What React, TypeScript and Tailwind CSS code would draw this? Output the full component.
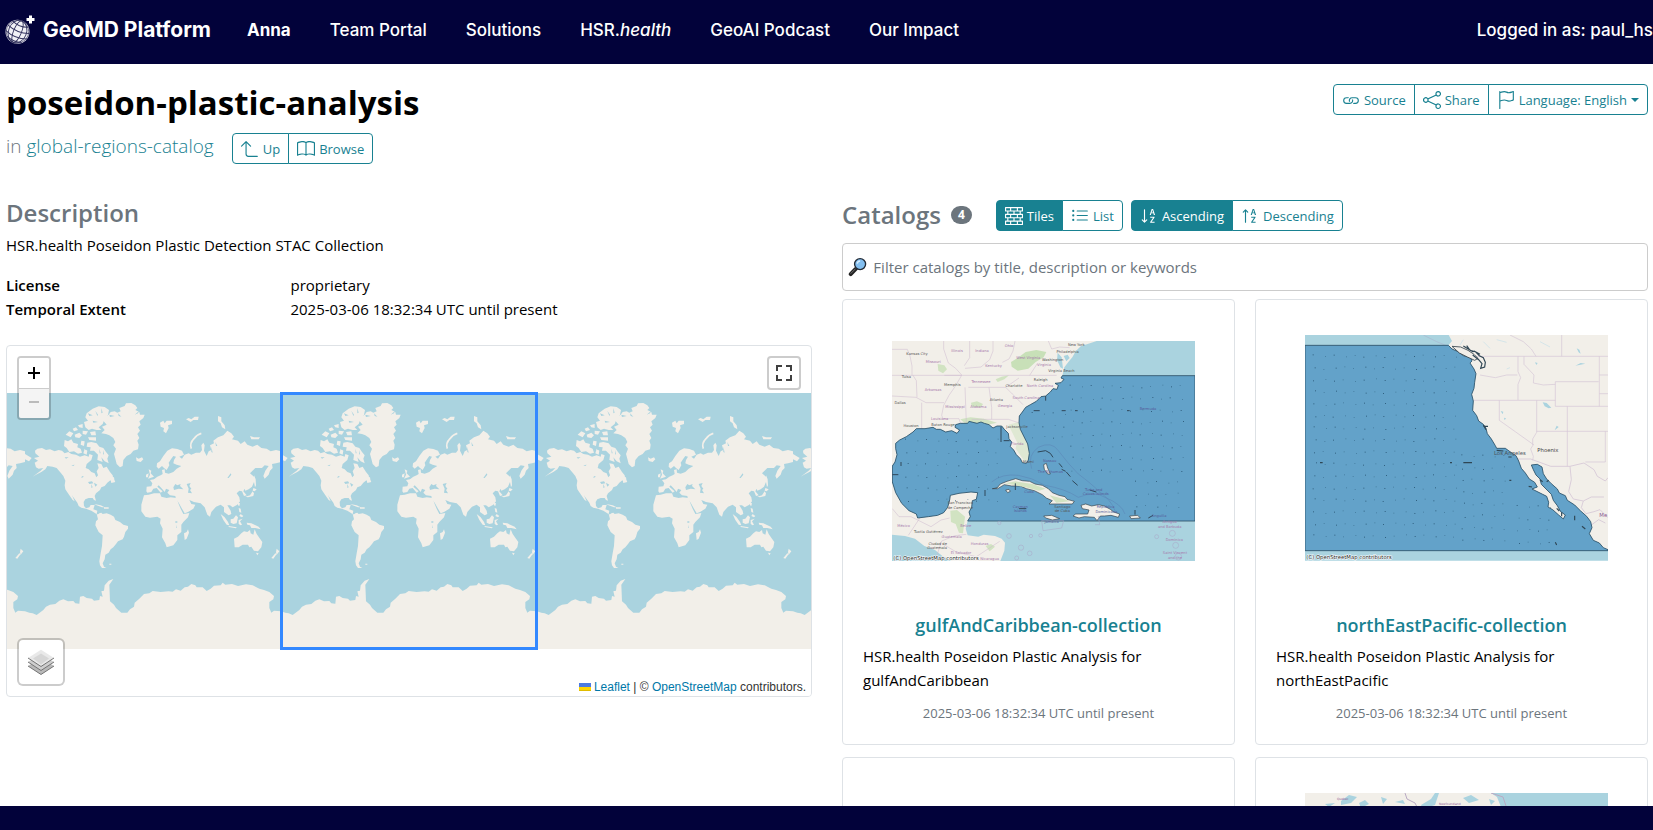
import type { ReactNode } from "react";
import {
  BsArrow90DegUp,
  BsBook,
  BsBricks,
  BsFlag,
  BsLink,
  BsListUl,
  BsShare,
  BsSortAlphaDown,
  BsSortAlphaUp,
} from "react-icons/bs";
import clsx from "clsx";

const NAV_LINKS = ["Team Portal", "Solutions", "HSR.health", "GeoAI Podcast", "Our Impact"];

/* ================= BUTTONS ================= */
type GroupButtonProps = {
  icon: ReactNode;
  children: ReactNode;
  active?: boolean;
};

function GroupButton({ icon, children, active }: GroupButtonProps) {
  return (
    <button
      type="button"
      className={clsx(
        "-ml-px flex h-[31px] items-center gap-1 border border-[#188191] px-2 text-[13px] first:ml-0 first:rounded-l last:rounded-r",
        active ? "bg-[#188191] text-white" : "bg-white text-[#188191]"
      )}
    >
      {icon}
      {children}
    </button>
  );
}

/* ================= LOGO ================= */
function GlobeLogo() {
  return (
    <svg viewBox="0 0 30 32" className="h-8 w-[30px]" aria-hidden="true">
      <circle cx="12.500" cy="17.700" r="12" fill="#f1f1f6" />
      <g fill="none" stroke="#34345f" strokeWidth="0.900" transform="rotate(22 12.500 17.700)">
        <circle cx="12.500" cy="17.700" r="11.300" strokeWidth="0.600" />
        <ellipse cx="12.500" cy="17.700" rx="4" ry="11.600" />
        <ellipse cx="12.500" cy="17.700" rx="9" ry="11.600" />
        <path d="M4 9.500q8.500 4 17 0M1 15q11.500 4.500 23 0M1 21q11.500 4.500 23 0M4.500 26q8 3 16 0" />
      </g>
      <path d="M24 1.500h3V4h2.500v3H27v2.500h-3V7h-2.500V4H24z" fill="#fff" />
    </svg>
  );
}

function SearchGlyph() {
  return (
    <svg viewBox="0 0 20 20" className="size-5" aria-hidden="true">
      <path d="M2.800 17.400 8 12" stroke="#222" strokeWidth="4" strokeLinecap="round" />
      <path d="M3 16.600 7.600 12" stroke="#777" strokeWidth="1" strokeLinecap="round" />
      <circle cx="12.500" cy="7" r="5.700" fill="#83bff0" stroke="#222b36" strokeWidth="1.400" />
      <path d="M9.500 6.500a3.400 3.400 0 0 1 3-2.800" stroke="#d8efff" strokeWidth="1.600" fill="none" />
    </svg>
  );
}

/* ================= WORLD MAP ================= */
function WorldSymbol() {
  return (
    <symbol id="world" viewBox="33 39 768 768">
      <rect x="33" y="39" width="768" height="768" fill="#aad3df" />
      <g fill="#f2efe9">
        {/* North America */}
        <path d="M63 212 70 206 84 204 96 210 108 208 122 214 134 210 144 212 152 220 163 216 172 222 186 224 198 230 212 226 224 230 226 222 236 226 232 240 218 252 215 264 224 268 232 276 242 280 247 292 252 286 248 274 254 264 250 250 262 252 268 264 278 260 288 276 296 286 298 296 304 306 292 309 290 300 280 308 272 318 262 322 258 330 246 340 242 348 246 362 240 360 236 354 224 354 214 358 209 366 210 378 216 385 226 382 230 375 242 375 238 388 250 392 248 402 262 404 256 409 244 400 232 392 216 386 202 383 194 378 190 368 178 352 174 346 182 364 176 360 162 340 154 328 152 316 154 302 148 288 140 278 128 264 116 260 100 258 94 268 82 276 66 284 56 290 80 272 88 264 74 266 66 262 62 248 72 242 60 234 76 230 64 220Z" />
        <path d="M218 100 236 86 254 79 272 81 285 90 282 104 272 116 266 132 254 142 262 150 248 150 234 146 224 150 214 142 210 126 222 122 214 112Z" />
        <path d="M152 180 162 184 172 178 178 188 192 192 190 202 200 206 204 218 192 221 180 214 166 216 158 204 150 198Z" />
        <path d="M220 188 232 186 248 190 256 200 268 204 276 216 284 226 280 236 284 250 272 244 262 232 266 246 250 240 252 224 240 212 228 212 230 202 218 200Z" />
        <path d="M155 164 166 154 178 160 170 172ZM176 146 186 142 192 150 180 154ZM182 164 196 158 204 166 196 174 184 172ZM206 152 222 154 216 164 206 162ZM222 172 246 172 246 182 226 180ZM202 182 212 184 210 198 200 194ZM192 136 206 132 206 144 196 142ZM228 156 244 154 246 166 232 166ZM212 206 220 212 218 224 208 220Z" />
        <path d="M288 290 300 292 302 306 290 302Z" />
        {/* Greenland and Iceland */}
        <path d="M266 120 272 110 284 104 290 96 302 94 310 98 320 94 316 84 332 78 336 70 352 69 364 76 370 84 364 90 376 96 378 104 392 104 388 114 376 124 380 134 372 142 378 152 370 162 376 174 370 182 374 194 372 208 358 212 350 222 338 228 328 240 326 258 318 262 308 252 304 236 300 222 306 206 298 196 304 186 298 174 286 166 276 162 262 160 272 150 264 140 278 134Z" />
        <path d="M366 232 374 236 384 232 388 238 380 246 368 243Z" />
        {/* South America */}
        <path d="M249 406 256 400 262 398 266 402 278 400 290 404 300 410 304 420 318 426 328 434 342 438 342 446 334 456 330 470 326 478 312 484 306 492 298 502 290 508 284 518 274 524 272 538 266 550 270 560 277 564 264 564 258 556 256 544 260 520 264 498 266 466 254 456 244 436 246 424 252 418Z" />
        {/* Europe and Asia */}
        <path d="M400 338 397 334 398 320 412 319 415 310 408 300 420 298 430 290 440 286 446 282 444 270 452 268 453 278 464 281 478 276 488 266 502 258 488 254 478 250 480 240 486 230 478 228 472 236 464 248 466 256 458 270 450 264 444 258 434 266 428 260 429 250 438 244 448 228 460 212 474 205 490 207 504 212 510 224 496 230 504 236 512 224 524 220 532 224 546 218 558 218 564 210 562 196 568 188 572 196 570 212 578 228 584 214 592 210 588 196 600 190 598 182 612 172 628 166 640 152 652 160 660 170 654 178 672 182 680 192 692 184 700 194 716 200 730 194 742 204 758 206 770 214 786 210 801 214 801 246 786 250 774 252 776 264 768 272 764 284 752 296 748 288 754 272 764 258 752 256 744 264 724 264 708 280 720 290 720 306 714 320 704 328 694 332 692 326 688 334 698 346 690 348 684 334 676 332 668 340 676 352 678 364 670 374 656 382 648 376 640 376 650 392 652 402 644 406 630 396 630 382 620 374 606 380 592 396 588 410 580 404 572 382 560 370 540 366 526 360 532 372 544 374 538 386 522 396 512 400 504 386 494 368 486 358 484 348 468 346 460 338 466 330 456 326 452 336 444 326 434 316 430 320 446 334 440 338 428 324 418 326 412 336Z" />
        <path d="M390 346 404 344 420 340 438 340 442 350 458 354 470 352 488 354 494 372 500 386 508 402 526 399 522 412 508 426 502 434 502 456 490 466 490 480 478 496 458 502 454 490 444 472 446 446 438 430 440 416 430 410 408 413 394 410 382 394 382 374Z" />
        <path d="M510 460 518 456 522 448 525 458 518 476 512 480Z" />
        {/* Islands around Europe and the Arctic */}
        <path d="M404 268 412 272 410 280 420 290 402 296 408 284ZM396 284 404 280 402 292 396 292ZM438 128 448 122 452 130 458 122 474 122 474 132 462 136 464 144 456 160 448 154 450 144 440 140Z" />
        <path d="M516 118l8-4 8 4 10-8 12 0-2 10-14 0-8 6ZM612 108l10 4 0 12 10 12 2 12-10-6-4-12-8-6ZM708 168l12 4 18 0-4 6-22 0Z" />
        {/* East Asia and Oceania */}
        <path d="M720 286l5 12 1 18-3 6-3-16ZM718 324l10 4-6 6-6-2ZM716 334l4 6-2 8-16 4-8-2 14-4ZM672 368l6 2-2 8-4-2Z" />
        <path d="M620 402l12 10 10 14 4 10-8-2-10-14ZM650 418l8-2 8-10 6 6-4 18-10 2-8-4ZM644 438l24 4-2 3-22-4ZM674 420l12-4-8 8 6 10-4 2-6-4ZM674 384l6 2 2 12-6-2ZM680 402l8 6-4 4-8-4ZM698 428l14 2 22 10 6 8-16-4-12 0-4-8-8-2Z" />
        <path d="M660 476 672 470 682 460 690 454 700 456 708 450 710 460 718 464 722 448 728 462 738 476 745 486 742 502 732 514 720 512 712 500 706 502 702 494 686 494 674 502 662 502ZM726 518l8 2-4 6ZM788 506l8 8-8 10-2-8ZM784 520l4 2-10 14-6-2Z" />
        <path d="M33 222l20 12-8 10-12-6ZM286 551h6v3h-6ZM240 372l20 4 12 6-8 0-16-6ZM270 382h14v4h-14Z" />
        {/* Antarctica */}
        <path d="M33 694 46 698 56 700 68 705 80 696 88 690 96 680 108 674 124 672 136 662 148 658 162 664 178 663 184 670 196 671 198 650 208 648 218 654 234 656 240 662 256 660 258 648 266 650 262 634 270 632 272 616 284 602 298 597 286 614 288 664 300 674 306 684 322 698 340 698 348 688 360 680 362 668 376 656 390 642 406 640 416 633 440 636 464 634 476 635 486 628 500 632 512 622 522 620 532 612 544 616 548 622 566 622 578 633 590 626 600 617 620 616 626 608 634 614 654 612 672 618 696 613 716 616 736 626 750 630 766 636 780 648 778 658 766 666 766 684 772 698 780 692 801 694V807H33Z" />
      </g>
      <path d="M532 206q-6-16 8-30 8-12 22-16" fill="none" stroke="#f2efe9" strokeWidth="5" />
      <g fill="#aad3df">
        <path d="M478 322 484 312 490 316 500 312 498 318 508 328 494 326 480 330ZM518 312 530 309 526 318 532 326 528 330 534 340 522 338 524 326Z" />
        <path d="M222 306l12-2 4 6-12 2ZM232 312l4 10-4 2ZM240 308l10 6-6 6ZM204 288l6 2-8 4ZM152 232l12 0-8 4ZM172 256l10-2-4 4ZM640 294l10-14 2 4-8 10ZM484 424h6v4h-6ZM486 434l2 10h-2Z" />
        <path d="M222 100l14 6-10 2ZM244 92l8 12-2 4ZM262 84l4 14-4 2ZM236 122l16 4-14 2ZM286 104l16 4-14 3ZM312 100l10 10-8-2ZM376 92l-14 12 10-4ZM198 192l4 12-2 2ZM214 190l3 20-3 0ZM256 206l4 14-3 0ZM268 210l2 14-3-2ZM604 186l6 12-4 0ZM592 200l4 18-4-2Z" />
      </g>
    </symbol>
  );
}

function ExtentMap() {
  return (
    <div className="relative h-[352px] overflow-hidden rounded border border-[#dee2e6] bg-white">
      <svg width="0" height="0" className="absolute" aria-hidden="true">
        <WorldSymbol />
      </svg>
      <div className="flex h-full items-center justify-center">
        {[0, 1, 2, 3, 4].map((i) => (
          <svg key={i} className="size-64 shrink-0" role="img" aria-label="World map">
            <use href="#world" width="256" height="256" />
          </svg>
        ))}
      </div>
      <div className="absolute inset-0 flex items-center justify-center">
        <div className="size-[258px] border-[3px] border-[#3388ff]" />
      </div>

      <div className="absolute top-2.5 left-2.5 rounded border-2 border-black/20 bg-clip-padding">
        <button
          type="button"
          aria-label="Zoom in"
          className="flex size-[30px] items-center justify-center rounded-t-xs bg-white"
        >
          <svg viewBox="0 0 12 12" className="size-3">
            <path d="M0 6h12M6 0v12" stroke="#000" strokeWidth="2" />
          </svg>
        </button>
        <button
          type="button"
          aria-label="Zoom out"
          disabled
          className="flex h-[30px] w-[30px] items-center justify-center rounded-b-xs border-t border-[#ccc] bg-[#f4f4f4] pb-1"
        >
          <svg viewBox="0 0 10 2" className="h-0.5 w-2.5">
            <path d="M0 1h10" stroke="#bbb" strokeWidth="2" />
          </svg>
        </button>
      </div>

      <button
        type="button"
        aria-label="Full screen"
        className="absolute top-2.5 right-2.5 flex size-[34px] items-center justify-center rounded border-2 border-black/20 bg-white bg-clip-padding"
      >
        <svg viewBox="0 0 16 16" className="size-4">
          <path d="M1 6V1h5M10 1h5v5M15 10v5h-5M6 15H1v-5" fill="none" stroke="#404040" strokeWidth="2" />
        </svg>
      </button>

      <button
        type="button"
        aria-label="Layers"
        className="absolute bottom-2.5 left-2.5 flex size-12 items-center justify-center rounded-md border-2 border-black/20 bg-white bg-clip-padding"
      >
        <svg viewBox="0 0 26 26" className="size-[26px]">
          <path d="M0 17 13 9l13 8-13 8.500z" fill="#b9b9b9" />
          <path d="M0 17l13 8.500L26 17" fill="none" stroke="#747474" />
          <path d="M0 13 13 5l13 8-13 8.500z" fill="#cecece" />
          <path d="M0 13l13 8.500L26 13" fill="none" stroke="#747474" />
          <path d="M0 9 13 .800 26 9l-13 8.500z" fill="#e9e9e9" />
          <path d="M5 9.500 13 4.500l8 5-8 6z" fill="#d6d6d6" />
          <path d="M0 9l13 8.500L26 9" fill="none" stroke="#747474" />
        </svg>
      </button>

      <div className="absolute right-0 bottom-0 flex items-center gap-[3px] bg-white/80 px-[5px] font-['Liberation_Sans',sans-serif] text-xs leading-[18px] text-[#333]">
        <svg viewBox="0 0 12 8" className="h-2 w-3" aria-hidden="true">
          <path d="M0 0h12v4H0z" fill="#4c7be1" />
          <path d="M0 4h12v3H0z" fill="#ffd500" />
          <path d="M0 7h12v1H0z" fill="#e0bc00" />
        </svg>
        <p>
          <a href="#leaflet" className="text-[#0078a8]">Leaflet</a> | ©{" "}
          <a href="#osm" className="text-[#0078a8]">OpenStreetMap</a> contributors.
        </p>
      </div>
    </div>
  );
}

/* ================= THUMBNAILS ================= */
type Label = [x: number, y: number, text: string];

function MapLabels({ labels, fill }: { labels: Label[]; fill: string }) {
  return (
    <g fill={fill} fontSize="11" textAnchor="middle" fontFamily="'DejaVu Sans', sans-serif">
      {labels.map(([x, y, text]) => (
        <text key={`${text}-${y}`} x={x} y={y}>
          {text}
        </text>
      ))}
    </g>
  );
}

type SoundingsProps = { x: number; y: number; cols: number; rows: number };

function Soundings({ x, y, cols, rows }: SoundingsProps) {
  const dots = Array.from({ length: cols * rows }, (_, i) => ({
    cx: x + (i % cols) * 30 + ((i * 7) % 11),
    cy: y + Math.floor(i / cols) * 36 + ((i * 5) % 9),
    strong: (i * 13) % 5 < 2,
  }));
  return (
    <g fill="#24506e">
      {dots.map((d, i) => (
        <rect key={i} x={d.cx} y={d.cy} width="3" height="3" opacity={d.strong ? 0.8 : 0.4} />
      ))}
    </g>
  );
}

const GULF_COAST =
  "682 241 678 248 687 252 678 262 660 264 670 270 666 282 654 280 646 290 632 302 618 304 604 318 586 328 572 336 562 350 553 362 552 382 556 402 566 422 578 446 583 474 580 494 574 504 562 502 556 490 544 478 536 464 526 454 530 440 522 430 520 414 508 402 500 392 486 392 474 398 462 388 448 384 438 380 426 384 402 378 398 384 376 384 362 388 360 396 374 404 366 414 350 406 332 410 316 402 304 402 294 396 270 400 244 400 234 410 214 424 194 434 182 444 182 460 186 478 180 500 172 512 172 560 182 592 200 624 222 646 244 656 248 668 280 664 308 660 326 652 338 636 344 614 346 600 372 594 408 590 428 592 424 612 412 616 410 636 402 650 406 664 398 677";

function GulfMap() {
  return (
    <svg viewBox="171 137 909 660" className="w-full" role="img" aria-label="Gulf and Caribbean">
      <path d="M171 137H1080V797H171Z" fill="#aad3df" />
      <path
        d={`M171 137H785L758 146 738 152 722 168 712 186 700 200 688 216 ${GULF_COAST} 392 700 398 720 430 724 446 718 480 722 500 730 510 742 508 766 496 797H350L322 782 300 764 268 752 240 730 210 722 171 718Z`}
        fill="#f2efe9"
      />
      <g fill="#c8e0b8">
        <path d="M528 200 548 188 572 170 604 164 634 170 626 186 602 200 580 220 548 226 530 214Z" />
        <path d="M308 206l20 4 8 12-12 12-14-8ZM482 252l18-8 22-4-14 12-20 8ZM346 646l20-2 24 20-6 50-12-2-10-26-14-6ZM452 752l16-6 12 8-16 14ZM408 322l18-4 18 8-6 10-28-2ZM376 372l30-6 40 4 40 12-28 6-70-6Z" opacity=".8" />
        <path d="M520 388l32-8 8 30 22 48 0 34-12 8-14-20-14-20 4-20Z" opacity=".45" />
      </g>
      <g fill="none" stroke="#cdb9cf" strokeWidth="1.500">
        <path d="M171 162h46l8 20 6 30v28M171 240h494M234 240l10 16 2 50M171 302l72 4 30 16h54M328 240l52 0-20 34-18 26-16 30-6 30 4 10h48l6 20M260 322v78M390 276l4 106M462 276l8 60v36h-60M400 276h112l20 20 32 32M512 276l40-28M326 137v24l14 42 22 16 18 20M404 137v50l-16 24M474 137v30l-10 26-26 22-48 4M540 137l-6 30-12 24-20 10M640 137l10 24 24-6 30 2M606 206l-22 34M470 372h50l30 10" />
        <path d="M172 640l20 24 36 0 60 30 30-20 26-6M300 797l20-60 40-16 34-4M320 744l44 26 60 14 70-46M260 660l-40 60" />
      </g>
      <path
        d="M668 172l12 14 4 34-8-4-10-22ZM686 182l12-4 6 10-10 10Z"
        fill="#aad3df"
      />
      <path d={`M${GULF_COAST}H1080V241Z`} fill="#63a2c9" stroke="#2b4f66" strokeWidth="2.500" />
      <Soundings x={704} y={268} cols={12} rows={8} />
      <Soundings x={210} y={430} cols={10} rows={6} />
      <Soundings x={590} y={350} cols={4} rows={3} />
      <Soundings x={900} y={556} cols={5} rows={3} />
      <path
        d="M470 560q30-26 80-20 40 6 80 30 60 10 100 36 50-20 80 0 50 20 60 50M590 520q-14-40 20-64 40-20 60 10 30 40 60 70 40 30 60 50 40 30 50 60"
        fill="none"
        stroke="#5b82b4"
        strokeWidth="1.500"
      />
      <g fill="#f2efe9" stroke="#33414a" strokeWidth="2">
        <path d="M472 580 486 578 496 566 516 558 542 550 562 556 584 558 600 566 622 570 640 580 652 592 672 600 690 604 696 612 718 618 712 626 684 626 642 626 652 616 634 608 622 598 598 586 574 580 556 572 530 572 508 568 488 580Z" />
        <path d="M738 630 752 626 770 632 790 628 808 632 826 642 836 650 854 656 850 666 828 660 808 662 796 662 786 676 778 666 748 664 732 668 714 662 722 656 758 656 762 644 742 640Z" />
        <path d="M626 662 650 660 674 670 652 674 632 668ZM884 662 908 660 916 668 888 670ZM512 584l10-2 4 6-8 4ZM626 508l8-4 4 14 8 18-8 0-10-14Z" />
      </g>
      <path d="M510 564l32-6 50 8 40 14-20 6-40-10ZM644 600l40 10 20 8-40 4Z" fill="#d3e3c2" />
      <path
        d="M608 470l24-4 14 8 8 12M672 504l10 12M680 522l12 6M694 530l12 14M712 556l16 14M764 584l20 6M940 668l14-8M596 346h18M680 346h12M720 346h8M876 346h8M498 394v46M506 436h18M632 302v14M450 584v18M541 564v20M552 640h22M172 538h18M198 500v12M900 644v14"
        fill="none"
        stroke="#30485a"
        strokeWidth="3"
      />
      <g fill="none" stroke="#a9a4c6" strokeWidth="1.500">
        <path d="M620 676l66 0-6 22-56 8ZM790 662l4 26-14 0" />
        <circle cx="493" cy="683" r="5" />
        <circle cx="588" cy="722" r="5" />
        <circle cx="616" cy="720" r="5" />
        <circle cx="522" cy="722" r="7" />
        <circle cx="558" cy="757" r="8" />
        <circle cx="584" cy="774" r="7" />
        <circle cx="965" cy="724" r="6" />
        <circle cx="1012" cy="714" r="9" />
        <circle cx="1022" cy="750" r="9" />
        <circle cx="1030" cy="784" r="10" />
        <circle cx="545" cy="788" r="6" />
      </g>
      <MapLabels
        fill="#555"
        labels={[
          [246, 180, "Kansas City"],
          [214, 248, "Tulsa"],
          [352, 271, "Memphis"],
          [537, 276, "Charlotte"],
          [484, 316, "Atlanta"],
          [195, 326, "Dallas"],
          [228, 396, "Houston"],
          [324, 393, "Baton Rouge"],
          [546, 399, "Jacksonville"],
          [617, 256, "Raleigh"],
          [679, 231, "Virginia Beach"],
          [653, 198, "Washington"],
          [698, 172, "Philadelphia"],
          [724, 153, "New York"],
          [580, 502, "Miami"],
          [376, 627, "San Francisco"],
          [376, 640, "de Campeche"],
          [280, 713, "Tuxtla Gutiérrez"],
          [308, 748, "Ciudad de"],
          [306, 760, "Guatemala"],
          [682, 637, "Santiago"],
          [682, 650, "de Cuba"],
        ]}
      />
      <MapLabels
        fill="#a77aac"
        labels={[
          [295, 203, "Missouri"],
          [366, 169, "Illinois"],
          [441, 169, "Indiana"],
          [522, 156, "Ohio"],
          [476, 216, "Kentucky"],
          [580, 190, "West Virginia"],
          [627, 211, "Virginia"],
          [438, 262, "Tennessee"],
          [294, 287, "Arkansas"],
          [615, 276, "North Carolina"],
          [573, 312, "South Carolina"],
          [360, 337, "Mississippi"],
          [430, 337, "Alabama"],
          [510, 334, "Georgia"],
          [314, 375, "Louisiana"],
          [547, 449, "Florida"],
          [206, 695, "México"],
          [392, 694, "Belize"],
          [350, 729, "Guatemala"],
          [434, 749, "Honduras"],
          [378, 775, "El Salvador"],
          [464, 795, "Nicaragua"],
          [1004, 684, "Antigua"],
          [1004, 697, "and Barbuda"],
          [1018, 736, "Dominica"],
          [1020, 777, "Saint Vincent"],
          [1020, 791, "and the"],
        ]}
      />
      <MapLabels
        fill="#575e9c"
        labels={[
          [939, 343, "Bermuda"],
          [644, 500, "Nassau"],
          [646, 534, "The Bahamas"],
          [582, 594, "Cuba"],
          [556, 637, "Cayman"],
          [556, 650, "Islands"],
          [650, 682, "Jamaica"],
          [776, 586, "Turks and"],
          [782, 599, "Caicos Islands"],
          [812, 639, "República"],
          [814, 652, "Dominicana"],
          [972, 664, "Anguilla"],
        ]}
      />
      <text x="175" y="793" fontSize="16" fill="#222" stroke="#fff" strokeWidth="3" paintOrder="stroke" fontFamily="'DejaVu Sans', sans-serif">
        (C) OpenStreetMap contributors
      </text>
    </svg>
  );
}

const PACIFIC_COAST =
  "595 151 606 162 624 170 640 182 662 188 666 198 660 204 672 222 678 236 674 262 672 280 665 298 670 318 668 346 680 362 686 378 700 388 708 400 712 416 724 432 736 452 740 460 766 460 780 470 798 482 806 498 814 520 826 534 838 552 854 562 862 576 846 582 858 588 878 598 890 604 896 622 894 636 908 644 926 660 940 672 946 660 932 650 922 632 910 616 904 598 888 582 874 568 870 552 858 540 850 524 844 510 862 508 876 516 880 536 890 552 904 566 922 582 928 594 946 602 952 616 974 630 992 648 1010 664 1022 680 1026 698 1018 716 1030 736 1048 744 1060 758 1074 764";

function PacificMap() {
  return (
    <svg viewBox="165 120 909 677" className="w-full" role="img" aria-label="North east Pacific">
      <path d="M165 120H1074V797H165Z" fill="#aad3df" />
      <path d={`M${PACIFIC_COAST}V120H596L606 138Z`} fill="#f2efe9" />
      <path d="M520 120l40 20 30 12" fill="none" stroke="#a9b7d0" strokeWidth="2" />
      <g fill="none" stroke="#d5c6d6" strokeWidth="2">
        <path d="M660 184h414M780 120l40 20 24 22 14 22M935 120v64M690 240l46 8 34-8h32M804 184v46l8 18-8 20 0 47M822 184v24l30 32-2 24 30 6 36-2M916 260h130M916 260v74h158M672 316h244M748 316v60l104 74M860 316v96l-12 20 0 20-6 10 8 22-2 12M860 409h214M952 334v180M1048 184v150M1048 240h26M1048 296h26M1066 409v92h-60" />
        <path d="M802 492h40l60 22h58l42-10 30 20 10 20 24 14 8-10M960 514l4 40-8 36 14 22M970 612l30 6 24-12 38 0M1000 618l-6 20 14 18 24-6 18-6 24 24M1024 690l22-16 20 10" strokeWidth="2.500" />
      </g>
      <g fill="#aad3df">
        <path d="M878 322l12 2 14 14-8 2-12-6ZM855 202l8 2-4 6ZM980 160l8 4 4 12-6-4ZM1006 206l-30 6 16-8ZM926 396l-12 10 6-14ZM752 348l8 2-2 8ZM762 368l6 2-4 6Z" />
        <path d="M700 140l20 20M740 134l30 8M870 140l30 16M640 134l-10 16M770 222l10-4" stroke="#c5e0e8" strokeWidth="2" />
      </g>
      <path d={`M165 151L${PACIFIC_COAST}V767H165Z`} fill="#63a2c9" stroke="#2b4f66" strokeWidth="2.500" />
      <Soundings x={188} y={178} cols={15} rows={16} />
      <Soundings x={634} y={478} cols={5} rows={8} />
      <Soundings x={800} y={630} cols={4} rows={4} />
      <path d="M606 154 632 156 654 166 672 178 684 190 674 196 652 186 628 174Z" fill="#f2efe9" stroke="#33414a" strokeWidth="2.500" />
      <path d="M650 152l10 14 16 4 12 12 12 6 6 14-2 14-12 4 4-14-10-12-18-14M672 168l18 10M640 153l30 18M700 394h14M700 390l8 14M740 466l20 2M775 486h10M836 574l10 2M870 554l8 6M890 560l6-4M920 640l8 8M935 652v12M996 694l10 8M916 742l4 8M778 556h6M640 503h26M600 503h6M210 503h8M974 662v14" fill="none" stroke="#2f4654" strokeWidth="3.500" />
      <g fontSize="16" fontFamily="'DejaVu Sans', sans-serif">
        <text x="732" y="481" fill="#4c5560">Los Angeles</text>
        <text x="862" y="470" fill="#444">Phoenix</text>
        <text x="1048" y="667" fill="#8d5d92">Me</text>
        <text x="169" y="793" fill="#222" stroke="#fff" strokeWidth="3" paintOrder="stroke">
          (C) OpenStreetMap contributors
        </text>
      </g>
    </svg>
  );
}

function NorthMap() {
  return (
    <svg viewBox="0 0 303 226" className="w-full" role="img" aria-label="Collection preview">
      <path d="M0 0h303v226H0z" fill="#aad3df" />
      <path d="M0 0h186l6 4 4 10-8 4 6 8-10 200H0z" fill="#f2efe9" />
      <g fill="#aad3df">
        <path d="M36 8l8-6 8 2-6 6-10 2ZM20 11l10-1-6 4ZM54 10l6-3 4 4-8 4ZM116 12l10-6 4-6 4 0-4 12-12 4ZM76 4l6 2-4 5ZM90 9l8-2 2 4ZM158 5l8-3 8 5-10 3ZM140 13h20v2h-20ZM184 6l6 2-4 4Z" />
      </g>
      <path d="M100 0l2 6 8 4 4 8M186 0l12 4 4 12" fill="none" stroke="#b9aac4" />
      <g fill="#8f6096" fontSize="3" fontFamily="'DejaVu Sans', sans-serif">
        <text x="32" y="7">Quebec</text>
        <text x="134" y="12">Newfoundland</text>
      </g>
    </svg>
  );
}

/* ================= CARDS ================= */
type Catalog = {
  title: string;
  description: string;
  preview: ReactNode;
};

const CATALOGS: Catalog[] = [
  {
    title: "gulfAndCaribbean-collection",
    description: "HSR.health Poseidon Plastic Analysis for gulfAndCaribbean",
    preview: <GulfMap />,
  },
  {
    title: "northEastPacific-collection",
    description: "HSR.health Poseidon Plastic Analysis for northEastPacific",
    preview: <PacificMap />,
  },
];

function CatalogCard({ title, description, preview }: Catalog) {
  return (
    <article className="flex flex-col rounded border border-[#dee2e6] px-5 pt-[35px] pb-5">
      <div className="flex aspect-[351/226] w-full items-end pr-[19px] pl-[29px]">{preview}</div>
      <h3 className="mt-[52px] text-center text-lg leading-6 font-semibold text-[#188191]">
        <a href={`#${title}`}>{title}</a>
      </h3>
      <p className="mt-[7px] pr-8 leading-6">{description}</p>
      <p className="mt-[11px] mb-px text-center text-[13px] leading-5 text-[#6c757d]">
        2025-03-06 18:32:34 UTC until present
      </p>
    </article>
  );
}

export default function App() {
  return (
    <div className="flex h-screen flex-col overflow-hidden bg-white font-['Open_Sans',sans-serif] text-[15px] leading-6 text-black">
      {/* Top navigation */}
      <header className="flex h-16 shrink-0 items-center bg-[#02023a] pb-1 pl-[5px] font-['Inter',sans-serif] text-white">
        <a href="#home" className="flex items-center gap-2 text-[21px] font-bold">
          <GlobeLogo />
          GeoMD Platform
        </a>
        <nav className="ml-9 flex items-center gap-[39px] text-[17px] font-medium whitespace-nowrap">
          <a href="#anna" className="font-bold">Anna</a>
          {NAV_LINKS.map((link) => (
            <a key={link} href={`#${link}`}>
              {link === "HSR.health" ? <>HSR.<i>health</i></> : link}
            </a>
          ))}
        </nav>
        <span className="ml-auto text-[17px] font-medium whitespace-nowrap">Logged in as: paul_hs</span>
      </header>

      <main className="min-h-0 flex-1 overflow-hidden pt-5 pr-[5px] pl-1.5">
        {/* Page title */}
        <div className="flex items-start justify-between">
          <div>
            <h1 className="text-[33px] leading-[38px] font-bold">poseidon-plastic-analysis</h1>
            <div className="mt-[11px] flex items-start gap-[18px]">
              <p className="text-[19px] leading-[26px] font-light text-[#6c757d]">
                in <a href="#catalog" className="text-[#188191]">global-regions-catalog</a>
              </p>
              <div className="flex">
                <GroupButton icon={<BsArrow90DegUp size={18} />}>Up</GroupButton>
                <GroupButton icon={<BsBook size={18} />}>Browse</GroupButton>
              </div>
            </div>
          </div>
          <div className="flex">
            <GroupButton icon={<BsLink size={18} />}>Source</GroupButton>
            <GroupButton icon={<BsShare size={18} />}>Share</GroupButton>
            <GroupButton icon={<BsFlag size={18} />}>
              Language: English
              <span className="border-x-4 border-t-4 border-x-transparent border-t-[#188191]" />
            </GroupButton>
          </div>
        </div>

        <div className="mt-9 grid grid-cols-2 gap-[30px]">
          {/* Description */}
          <section>
            <h2 className="text-2xl leading-[26px] font-semibold text-[#6c757d]">Description</h2>
            <p className="mt-[7px]">HSR.health Poseidon Plastic Detection STAC Collection</p>
            <dl className="mt-4 mb-6 grid grid-cols-[6fr_11fr]">
              <dt className="font-semibold">License</dt>
              <dd>proprietary</dd>
              <dt className="font-semibold">Temporal Extent</dt>
              <dd>2025-03-06 18:32:34 UTC until present</dd>
            </dl>
            <ExtentMap />
          </section>

          {/* Catalogs */}
          <section>
            <div className="flex items-center">
              <h2 className="pb-0.5 text-2xl leading-7 font-semibold text-[#6c757d]">Catalogs</h2>
              <span className="mb-0.5 ml-2.5 rounded-full bg-[#6c757d] px-[7px] text-xs leading-[18px] font-bold text-white">4</span>
              <div className="ml-6 flex">
                <GroupButton active icon={<BsBricks size={18} />}>Tiles</GroupButton>
                <GroupButton icon={<BsListUl size={18} />}>List</GroupButton>
              </div>
              <div className="ml-2 flex">
                <GroupButton active icon={<BsSortAlphaDown size={18} />}>Ascending</GroupButton>
                <GroupButton icon={<BsSortAlphaUp size={18} />}>Descending</GroupButton>
              </div>
            </div>
            <label className="mt-3 flex h-12 items-center gap-1.5 rounded border border-[#ccc] px-[5px]">
              <SearchGlyph />
              <input
                type="search"
                aria-label="Filter catalogs"
                placeholder="Filter catalogs by title, description or keywords"
                className="w-full outline-none placeholder:text-[#6c757d]"
              />
            </label>
            <div className="mt-2 grid grid-cols-2 gap-x-5 gap-y-3">
              {CATALOGS.map((catalog) => (
                <CatalogCard key={catalog.title} {...catalog} />
              ))}
              <article className="h-[446px] rounded border border-[#dee2e6]" />
              <article className="h-[446px] rounded border border-[#dee2e6] pt-[35px] pr-[39px] pl-[49px]">
                <NorthMap />
              </article>
            </div>
          </section>
        </div>
      </main>

      <footer className="h-6 shrink-0 bg-[#02023a]" />
    </div>
  );
}
